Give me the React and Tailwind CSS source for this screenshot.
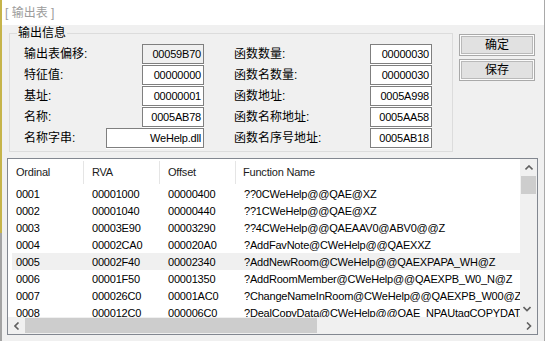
import React from "react";

const leftFields = [
  { label: "输出表偏移:", value: "00059B70", readOnly: true },
  { label: "特征值:", value: "00000000" },
  { label: "基址:", value: "00000001" },
  { label: "名称:", value: "0005AB78" },
  { label: "名称字串:", value: "WeHelp.dll", wide: true },
];

const rightFields = [
  { label: "函数数量:", value: "00000030" },
  { label: "函数名数量:", value: "00000030" },
  { label: "函数地址:", value: "0005A998" },
  { label: "函数名称地址:", value: "0005AA58" },
  { label: "函数名序号地址:", value: "0005AB18" },
];

const rows = [
  ["0001", "00001000", "00000400", "??0CWeHelp@@QAE@XZ"],
  ["0002", "00001040", "00000440", "??1CWeHelp@@QAE@XZ"],
  ["0003", "00003E90", "00003290", "??4CWeHelp@@QAEAAV0@ABV0@@Z"],
  ["0004", "00002CA0", "000020A0", "?AddFavNote@CWeHelp@@QAEXXZ"],
  ["0005", "00002F40", "00002340", "?AddNewRoom@CWeHelp@@QAEXPAPA_WH@Z"],
  ["0006", "00001F50", "00001350", "?AddRoomMember@CWeHelp@@QAEXPB_W0_N@Z"],
  ["0007", "000026C0", "00001AC0", "?ChangeNameInRoom@CWeHelp@@QAEXPB_W00@Z"],
  ["0008", "000012C0", "000006C0", "?DealCopyData@CWeHelp@@QAE_NPAUtagCOPYDATASTRUCT@@@Z"],
];

function Field({ label, value, readOnly, wide }) {
  return (
    <div className="flex h-[20px] items-center">
      <div className="flex-1 whitespace-nowrap">{label}</div>
      <div
        className={`flex h-[20px] items-center justify-end border border-[#7f7f7f] pr-[2px] tracking-[-0.2px] text-[11px] shadow-[0_1px_0_#ffffff] ${
          wide ? "w-[98px]" : "w-[62px]"
        } ${readOnly ? "bg-[#f0f0f0]" : "bg-white"}`}
      >
        {value}
      </div>
    </div>
  );
}

function Chevron({ dir }) {
  const pts = {
    up: "0.5,4.5 4,1 7.5,4.5",
    down: "0.5,1 4,4.5 7.5,1",
    left: "4.5,0.5 1,4 4.5,7.5",
    right: "1,0.5 4.5,4 1,7.5",
  }[dir];
  const vertical = dir === "up" || dir === "down";
  return (
    <svg width={vertical ? 8 : 6} height={vertical ? 6 : 8} viewBox={vertical ? "0 0 8 6" : "0 0 6 8"}>
      <polyline points={pts} fill="none" stroke="#606060" strokeWidth="1.6" />
    </svg>
  );
}

function WinButton({ children }) {
  return (
    <div className="flex h-[22px] w-[76px] items-center justify-center border border-[#a9a9a9] bg-[#e1e1e1] shadow-[inset_0_0_0_1px_#fbfbfb,inset_0_0_0_2px_#b9b9b9]">
      {children}
    </div>
  );
}

export default function App() {
  return (
    <div className="flex h-[341px] w-[545px] overflow-hidden bg-[#f0f0f0] font-['Liberation_Sans','Noto_Sans_CJK_SC',sans-serif] text-[12px] leading-[14px] text-black">
      <div className="flex w-[2px] flex-col">
        <div className="h-[233px] bg-[#c6b44a]" />
        <div className="flex-1 bg-[#a3a3a3]" />
      </div>

      <div className="flex flex-1 flex-col">
        <div className="flex h-[25px] items-center bg-white pl-[3px] text-[#9c9c9c]">[ 输出表 ]</div>

        <div className="flex items-start pl-[7px]">
          <div className="mt-[8px] h-[119px] w-[444px] border border-[#dcdcdc] pl-[14px]">
            <div className="-mt-[8px] ml-[-7px] w-fit bg-[#f0f0f0] px-[1px]">输出信息</div>
            <div className="mt-[4px] flex gap-[30px]">
              <div className="flex w-[180px] flex-col gap-[1px]">
                {leftFields.map((f) => (
                  <Field key={f.label} {...f} />
                ))}
              </div>
              <div className="flex w-[198px] flex-col gap-[1px]">
                {rightFields.map((f) => (
                  <Field key={f.label} {...f} />
                ))}
              </div>
            </div>
          </div>
          <div className="ml-[6px] mt-[9px] flex flex-col gap-[3px]">
            <WinButton>确定</WinButton>
            <WinButton>保存</WinButton>
          </div>
        </div>

        <div className="ml-[5px] mt-[6px] grid h-[177px] w-[531px] grid-cols-[1fr_17px] grid-rows-[158px_17px] border border-[#828790] bg-white text-[11px] tracking-[-0.2px]">
          <div className="overflow-hidden">
            <div className="flex h-[26px] items-center text-[#1a1a1a]">
              <div className="w-[75px] pl-[8px]">Ordinal</div>
              <div className="h-[23px] w-[1px] bg-[#e5e5e5]" />
              <div className="w-[75px] pl-[8px]">RVA</div>
              <div className="h-[23px] w-[1px] bg-[#e5e5e5]" />
              <div className="w-[75px] pl-[8px]">Offset</div>
              <div className="h-[23px] w-[1px] bg-[#e5e5e5]" />
              <div className="pl-[7px]">Function Name</div>
            </div>
            {rows.map((r) => (
              <div key={r[0]} className="pl-[4px]">
                <div
                  className={`flex h-[17px] items-center whitespace-nowrap ${
                    r[0] === "0005" ? "bg-[#f0f0f0]" : ""
                  }`}
                >
                  <div className="w-[72px] shrink-0 pl-[4px]">{r[0]}</div>
                  <div className="w-[76px] shrink-0 pl-[8px]">{r[1]}</div>
                  <div className="w-[76px] shrink-0 pl-[8px]">{r[2]}</div>
                  <div className="pl-[8px]">{r[3]}</div>
                </div>
              </div>
            ))}
          </div>

          <div className="flex flex-col bg-[#f0f0f0]">
            <div className="flex h-[17px] items-center justify-center">
              <Chevron dir="up" />
            </div>
            <div className="mx-[1px] h-[18px] bg-[#cdcdcd]" />
            <div className="flex-1" />
            <div className="flex h-[17px] items-center justify-center pr-[3px]">
              <Chevron dir="down" />
            </div>
          </div>

          <div className="col-span-2 flex items-center bg-[#f0f0f0]">
            <div className="flex h-[17px] w-[17px] items-center justify-center">
              <Chevron dir="left" />
            </div>
            <div className="my-[1px] h-[15px] w-[292px] bg-[#cdcdcd]" />
            <div className="flex-1" />
            <div className="flex h-[17px] w-[17px] items-center justify-center">
              <Chevron dir="right" />
            </div>
          </div>
        </div>
      </div>

      <div className="w-[1px] bg-[#a9a9a9]" />
    </div>
  );
}
